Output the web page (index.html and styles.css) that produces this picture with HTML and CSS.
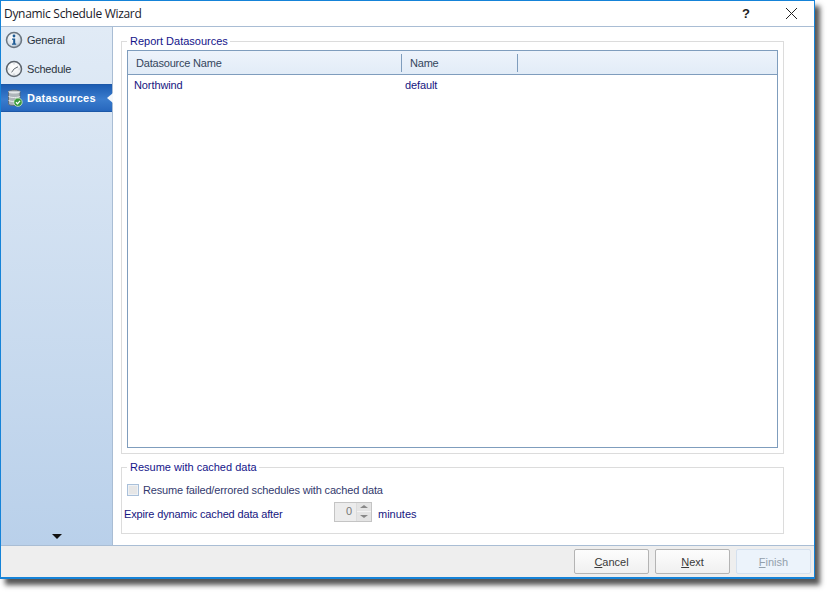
FILE: index.html
```html
<!DOCTYPE html>
<html lang="en">
<head>
<meta charset="utf-8">
<title>Dynamic Schedule Wizard</title>
<link rel="stylesheet" href="styles.css">
</head>
<body>
<div class="window">
  <header class="titlebar">
    <span class="title">Dynamic Schedule Wizard</span>
    <span class="help">?</span>
    <svg class="close" width="12" height="12" viewBox="0 0 12 12"><path d="M1 1L12 12M12 1L1 12" stroke="#222" stroke-width="1" fill="none"/></svg>
  </header>
  <div class="main">
    <nav class="sidebar">
      <div class="nav-item">
        <svg class="nav-icon" width="18" height="18" viewBox="0 0 18 18"><defs><radialGradient id="g1" cx=".4" cy=".35" r=".7"><stop offset="0" stop-color="#ffffff"/><stop offset=".7" stop-color="#d5dfe9"/><stop offset="1" stop-color="#98a8b8"/></radialGradient></defs><circle cx="9" cy="9" r="7.5" fill="url(#g1)" stroke="#6a7580" stroke-width="1.5"/><circle cx="9" cy="5" r="1.4" fill="#1d5a94"/><path d="M7 7.4H10.2V12.4H11.2V13.8H7V12.4H8.2V8.8H7Z" fill="#1d5a94"/></svg>
        <span>General</span>
      </div>
      <div class="nav-item">
        <svg class="nav-icon" width="18" height="18" viewBox="0 0 18 18"><defs><radialGradient id="g2" cx=".45" cy=".35" r=".75"><stop offset="0" stop-color="#ffffff"/><stop offset=".75" stop-color="#eef1f4"/><stop offset="1" stop-color="#b7bec6"/></radialGradient></defs><circle cx="9" cy="9" r="7.5" fill="url(#g2)" stroke="#5b636c" stroke-width="1.5"/><path d="M9 3.2V4.4M9 13.6V14.8M3.2 9H4.4M13.6 9H14.8" stroke="#a8afb6" stroke-width=".8"/><path d="M9.2 8.8L13 6.8M9.2 8.8L6.6 12.4" stroke="#5e666e" stroke-width="1" fill="none"/></svg>
        <span>Schedule</span>
      </div>
      <div class="nav-item active">
        <svg class="nav-icon" width="18" height="18" viewBox="0 0 18 18"><path d="M3.5 2.6C3.5 .6 15 .6 15 2.6V15C15 17 3.5 17 3.5 15Z" fill="#aeb5ba" stroke="#59626a" stroke-width=".8"/><path d="M3.5 2.6C3.5 4.6 15 4.6 15 2.6" fill="#dfe4e7" stroke="#eef1f3" stroke-width=".8"/><path d="M3.5 7C3.5 9 15 9 15 7M3.5 11C3.5 13 15 13 15 11" fill="none" stroke="#e9edef" stroke-width="1"/><circle cx="13" cy="13.2" r="4.2" fill="#3a9b3c" stroke="#e5f2e2" stroke-width=".7"/><path d="M11 13.2L12.5 14.8L15 11.8" stroke="#fff" stroke-width="1.3" fill="none"/></svg>
        <span>Datasources</span>
      </div>
      <div class="more"></div>
    </nav>
    <main class="content">
      <fieldset class="group group-sources">
        <legend>Report Datasources</legend>
        <div class="table">
          <div class="thead">
            <div class="th col-a">Datasource Name</div>
            <div class="th col-b">Name</div>
          </div>
          <div class="row">
            <div class="td col-a">Northwind</div>
            <div class="td col-b">default</div>
          </div>
        </div>
      </fieldset>
      <fieldset class="group group-cache">
        <legend>Resume with cached data</legend>
        <label class="check-row"><span class="checkbox"></span><span class="tight">Resume failed/errored schedules with cached data</span></label>
        <div class="expire-row">
          <span class="expire-label tight">Expire dynamic cached data after</span>
          <span class="spinner">
            <span class="spin-value">0</span>
            <span class="spin-btns">
              <span class="spin-btn"><i class="tri-up"></i></span>
              <span class="spin-btn"><i class="tri-down"></i></span>
            </span>
          </span>
          <span>minutes</span>
        </div>
      </fieldset>
    </main>
  </div>
  <footer class="footer">
    <button class="btn"><u>C</u>ancel</button>
    <button class="btn"><u>N</u>ext</button>
    <button class="btn disabled"><u>F</u>inish</button>
  </footer>
</div>
</body>
</html>
```

FILE: styles.css
```css
* { box-sizing: border-box; }
html, body { margin: 0; padding: 0; background: #fff; }
body {
  width: 830px;
  height: 594px;
  overflow: hidden;
  font-family: "Liberation Sans", Arial, sans-serif;
  font-size: 11px;
  color: #16167f;
}
.window {
  width: 815px;
  height: 579px;
  display: flex;
  flex-direction: column;
  background: #fff;
  border: 1px solid #1583d8;
  border-bottom-width: 2px;
  box-shadow: 5px 6px 5px rgba(30, 30, 30, .75);
}
.titlebar {
  height: 26px;
  flex: none;
  display: flex;
  align-items: center;
  padding: 0 17px 1px 3px;
  background: #fff;
  border-bottom: 1px solid #a9bdd4;
}
.title { font-family: "Open Sans", sans-serif; font-size: 12px; letter-spacing: -.3px; color: #1a1a2a; flex: 1; }
.help { font-family: "Liberation Sans", sans-serif; font-size: 13px; font-weight: bold; color: #222; margin-right: 35px; }
.main { flex: 1; display: flex; min-height: 0; }
.sidebar {
  width: 112px;
  flex: none;
  display: flex;
  flex-direction: column;
  background: linear-gradient(#e1ebf6, #b9d0ea);
  border-right: 1px solid #a9bdd4;
}
.nav-item {
  height: 30px;
  display: flex;
  align-items: center;
  gap: 4px;
  padding-left: 4px;
  color: #2a3340;
  letter-spacing: -.2px;
  position: relative;
}
.nav-item:first-child { height: 27px; padding-bottom: 1px; }
.nav-item.active {
  height: 28px;
  background: linear-gradient(#1c5cb2, #3a7ccd 55%, #2767bd);
  color: #fff;
  font-weight: bold;
  letter-spacing: .25px;
  border: 1px solid #1c58a8;
  border-width: 1px 0;
}
.nav-item.active::after {
  content: "";
  position: absolute;
  right: -1px;
  top: 8px;
  border: 5px solid transparent;
  border-left: 0;
  border-right: 6px solid #f4f8fc;
}
.more {
  margin: auto auto 6px;
  border: 5px solid transparent;
  border-top: 5px solid #111;
  border-bottom: 0;
}
.content {
  flex: 1;
  min-width: 0;
  display: flex;
  flex-direction: column;
  padding: 8px 30px 11px 8px;
  gap: 7px;
  background: #fff;
}
.group {
  margin: 0;
  padding: 0 5px;
  border: 1px solid #dcdcdc;
  min-width: 0;
}
.group legend {
  margin-left: 0;
  padding: 0 2px 0 3px;
  line-height: 13px;
  color: #14148a;
}
.group-sources { flex: 1; min-height: 0; display: flex; flex-direction: column; padding-bottom: 5px; }
.table {
  flex: 1;
  margin-top: 2px;
  border: 1px solid #7f9dbd;
}
.thead {
  height: 24px;
  display: flex;
  align-items: center;
  background: linear-gradient(#edf3fb, #e2ecf7);
  border-bottom: 1px solid #7f9dbd;
  color: #34465c;
}
.th { height: 18px; line-height: 18px; padding-left: 8px; letter-spacing: -.2px; }
.th.col-a { width: 274px; border-right: 1px solid #7f9dbd; }
.th.col-b { width: 116px; border-right: 1px solid #7f9dbd; }
.row { display: flex; height: 20px; align-items: center; }
.td { padding-left: 6px; letter-spacing: -.1px; }
.td.col-a { width: 274px; }
.td.col-b { padding-left: 3px; }
.tight { letter-spacing: -.15px; }
.group-cache { height: 73px; flex: none; }
.check-row { display: flex; align-items: center; gap: 4px; height: 13px; margin-top: 9px; color: #333a6e; }
.checkbox {
  width: 12px;
  height: 12px;
  background: #e6e6e6;
  border: 1px solid #a9c0da;
  box-shadow: inset 0 0 0 1px #eef1f4;
}
.expire-row { display: flex; align-items: center; height: 21px; margin: 7px 0 0 -3px; color: #16167f; }
.expire-label { width: 210px; }
.spinner {
  width: 38px;
  height: 20px;
  display: flex;
  margin: 0 6px 4px 0;
  background: #ececec;
  border: 1px solid #c4c4c4;
  color: #777;
}
.spin-value { flex: 1; text-align: right; padding: 2px 4px 0 0; line-height: 13px; }
.spin-btns { width: 15px; display: flex; flex-direction: column; border-left: 1px solid #dcdcdc; }
.spin-btn { flex: 1; display: flex; align-items: center; justify-content: center; background: #e4e4e4; }
.spin-btn + .spin-btn { border-top: 1px solid #f4f4f4; }
.tri-up { border: 4px solid transparent; border-top: 0; border-bottom: 3px solid #888; }
.tri-down { border: 4px solid transparent; border-bottom: 0; border-top: 3px solid #888; }
.footer {
  height: 32px;
  flex: none;
  display: flex;
  justify-content: flex-end;
  align-items: flex-start;
  gap: 6px;
  padding: 3px 3px 0 0;
  background: #eeeeee;
  border-top: 1px solid #a9bdd4;
}
.btn {
  width: 75px;
  height: 25px;
  padding: 0;
  font: inherit;
  color: #3a3a3a;
  background: linear-gradient(#fdfdfd, #f0f0f0);
  border: 1px solid #b4b4b4;
  border-radius: 2px;
}
.btn.disabled {
  color: #93a0ac;
  background: #ecf3fb;
  border-color: #d4e0ee;
}
```
